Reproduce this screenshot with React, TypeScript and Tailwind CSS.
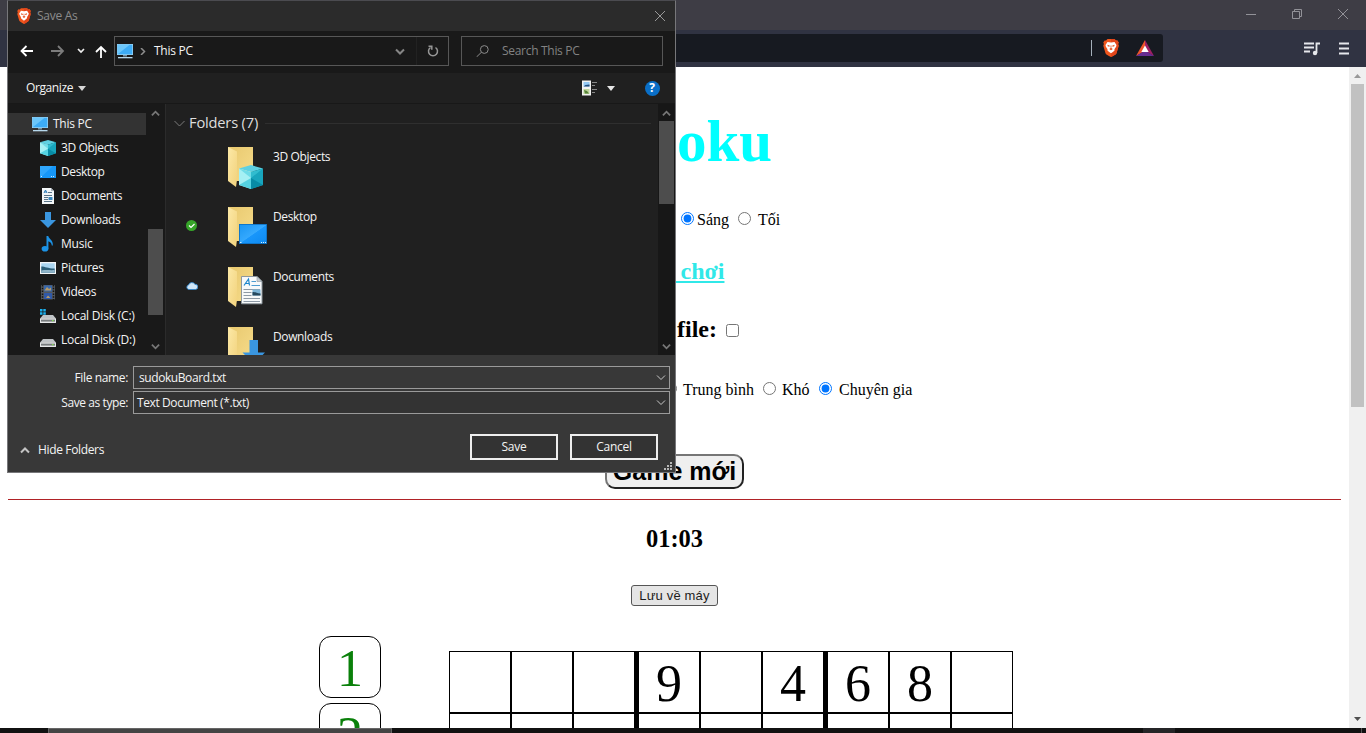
import React from "react";

const serif = "font-['Liberation_Serif',serif]";

function BraveIcon({ className }: { className: string }) {
  return (
    <svg viewBox="0 0 16 18" className={className}>
      <path d="M4.500 0h7l1.400 1.600 1.500-.2 1.300 2-.6 1.600.6 1.800-2.200 7.400c-.4 1.200-2.600 2.400-5.500 3.800-2.900-1.400-5.100-2.600-5.500-3.800L.3 6.800.9 5 .3 3.400l1.300-2 1.500.2z" fill="#f0561d" />
      <path d="M8 0h3.500l1.400 1.600 1.500-.2 1.300 2-.6 1.600.6 1.800-2.200 7.400c-.4 1.200-2.600 2.400-5.500 3.800z" fill="#e2451a" />
      <path d="M4.500 3l3.500.5L11.500 3l2 3-.4 1.700-1.700 2.600.3 1-1.500 1.400L8 14.300l-2.200-1.600-1.500-1.400.3-1-1.700-2.600L2.500 6z" fill="#fff" />
      <path d="M4.500 5.800l2.400.9-.6 1.100-1.600-.6zM11.500 5.800l-2.400.9.6 1.100 1.600-.6zM7.500 6.500h1L8.300 9l1.500.9L8 11.200 6.200 9.900 7.700 9z" fill="#e4501f" />
    </svg>
  );
}

function PcIcon({ className }: { className: string }) {
  return (
    <svg viewBox="0 0 16 16" className={className}>
      <rect x="0" y="1" width="16" height="11" fill="#9fd4f3" />
      <rect x=".7" y="1.700" width="14.600" height="9.600" fill="#3dacf6" />
      <path d="M.7 11.300V1.700h12z" fill="#6cc7fb" />
      <rect x="6" y="12" width="4" height="1.500" fill="#7795a8" />
      <rect x="1" y="14" width="14.500" height="1.300" fill="#b6d8ec" />
    </svg>
  );
}

function CubeShape() {
  return (
    <g>
      <path d="M12 0l12 3.500L12 7 0 3.500z" fill="#5ed0e2" />
      <path d="M0 3.500L12 7v17L0 20z" fill="#a5f0f4" />
      <path d="M0 3.500L12 7v6z" fill="#6fdce8" />
      <path d="M0 20l12-7v11z" fill="#55d3e2" />
      <path d="M24 3.500L12 7v17l12-4z" fill="#18a5bd" />
      <path d="M24 3.500L12 13V7z" fill="#31bccf" />
      <path d="M24 20l-12-7v11z" fill="#078ba5" />
    </g>
  );
}

const DownArrow = () => <path d="M5 0h6v8h5l-8 8-8-8h5z" fill="#3a96e0" />;

function SideIcon({ name }: { name: string }) {
  const c = "h-4 w-4 shrink-0";
  if (name === "This PC") return <PcIcon className={c} />;
  if (name === "3D Objects")
    return (
      <svg viewBox="0 0 24 24" className={c}>
        <CubeShape />
      </svg>
    );
  if (name === "Desktop")
    return (
      <svg viewBox="0 0 16 16" className={c}>
        <rect y="2" width="16" height="12" fill="#1697f8" />
        <path d="M0 14V2h13z" fill="#2fa6fc" />
        <path d="M1 12.500h1M11 12.500h1M13 12.500h1" stroke="#cbeaff" />
      </svg>
    );
  if (name === "Documents")
    return (
      <svg viewBox="0 0 16 16" className={c}>
        <path d="M2 0h9l3 3v13H2z" fill="#f3f6f8" />
        <path d="M11 0v3h3z" fill="#a9b4bc" />
        <path d="M4 5l1.500-3L7 5M4.500 4h2" stroke="#2a7ab8" fill="none" />
        <path d="M8 4.500h4M4 7.500h8M4 9.500h4M4 11.500h4M4 13.500h8" stroke="#5a7488" />
        <rect x="8.500" y="9" width="4" height="3" fill="#3a86bb" />
      </svg>
    );
  if (name === "Downloads")
    return (
      <svg viewBox="0 0 16 16" className={c}>
        <DownArrow />
      </svg>
    );
  if (name === "Music")
    return (
      <svg viewBox="0 0 16 16" className={c}>
        <ellipse cx="5" cy="12.800" rx="3.400" ry="2.800" fill="#1c93e6" />
        <path d="M6.500 0h1.800c.2 2.800 5.200 3.800 4.500 9.500h-1c-.2-2.500-1.300-3.500-3.400-4.300v7.600H6.500z" fill="#1c93e6" />
      </svg>
    );
  if (name === "Pictures")
    return (
      <svg viewBox="0 0 16 16" className={c}>
        <rect y="2" width="16" height="12" fill="#f2f5f7" />
        <rect x="1.300" y="3.300" width="13.400" height="9.400" fill="#a9d5f0" />
        <path d="M1.300 6.500c4 0 6 2 13.400 2v4.200H1.300z" fill="#2d5f78" />
        <path d="M1.300 10.500c5-1 9 0 13.400-.5v2.700H1.300z" fill="#8fb4c8" />
      </svg>
    );
  if (name === "Videos")
    return (
      <svg viewBox="0 0 16 16" className={c}>
        <rect x="1" y="1" width="14" height="14.500" fill="#55585c" />
        <path d="M2.500 1v15M13.500 1v15" stroke="#121212" strokeWidth="1.500" strokeDasharray="1.500 1.300" />
        <rect x="4" y="1.500" width="8" height="6" fill="#3767ab" />
        <rect x="4" y="9" width="8" height="6" fill="#3059a8" />
        <path d="M4.500 6.500L7 3l2 2 2-1.500v3zM6 14l2-2.500 2.500 2.500z" fill="#b59a6a" />
      </svg>
    );
  return (
    <svg viewBox="0 0 16 16" className={c}>
      <path d="M3 7h10l3 3.500H0z" fill="#bfc3c6" />
      <rect y="10.300" width="16" height="4.700" rx=".6" fill="#e6e8e9" />
      <rect x="1" y="11.600" width="14" height="2" fill="#777b7d" />
      <rect x="12" y="12" width="1.500" height="1.200" fill="#7ee04a" />
      {name.includes("C:") && (
        <path d="M0 1h2.500v2.500H0zM3.300 1h2.500v2.500H3.300zM0 4.200h2.500v2.500H0zM3.300 4.200h2.500v2.500H3.300z" fill="#1cb1ef" />
      )}
    </svg>
  );
}

function FolderIcon({ name }: { name: string }) {
  return (
    <svg viewBox="0 0 40 45" className="h-[45px] w-10 shrink-0">
      <defs>
        <linearGradient id="folderBack" x1="0" y1="0" x2="1" y2="1">
          <stop offset="0" stopColor="#e8c86e" />
          <stop offset="1" stopColor="#f6dc8b" />
        </linearGradient>
        <linearGradient id="folderFlap" x1="0" y1="0" x2="1" y2="1">
          <stop offset="0" stopColor="#fce9a7" />
          <stop offset="1" stopColor="#f2d27c" />
        </linearGradient>
        <linearGradient id="screen" x1="0" y1="0" x2="1" y2="1">
          <stop offset="0" stopColor="#1b96f2" />
          <stop offset=".5" stopColor="#35a9fe" />
          <stop offset=".52" stopColor="#1896fb" />
          <stop offset="1" stopColor="#0e8af0" />
        </linearGradient>
      </defs>
      <path d="M0 0h25v34H0z" fill="url(#folderBack)" />
      <path d="M0 0l9 4.500V33l-1 7-8-6z" fill="url(#folderFlap)" />
      {name === "3D Objects" && (
        <g transform="translate(11 18)">
          <CubeShape />
        </g>
      )}
      {name === "Desktop" && (
        <g>
          <rect x="11" y="17" width="28" height="20" fill="#0d6ebd" />
          <rect x="11.800" y="17.800" width="26.400" height="18.400" fill="url(#screen)" />
          <path d="M12 35.500h1.500M33 35.500h1M35 35.500h1M37 35.500h1" stroke="#d8efff" />
        </g>
      )}
      {name === "Documents" && (
        <g>
          <path d="M13.500 9.500H29l5 5v22.300H13.500z" fill="#f7f9fa" stroke="#8d979e" />
          <path d="M29 9.500v5h5z" fill="#c3cbd1" stroke="#8d979e" strokeWidth=".6" />
          <path d="M16 18.500l4.500-6.500 1 6.500M17.500 16.500h4" stroke="#1c86cd" strokeWidth="1.200" fill="none" />
          <path d="M23.500 14.500H28M23.500 18.500H32" stroke="#4d9bd0" />
          <path d="M15.500 22.500H32M15.500 25.500h8M15.500 28.500h8M15.500 31.500H32M15.500 34.500H32" stroke="#8d99a5" />
          <rect x="24.500" y="22.500" width="8" height="6" fill="#7db5d8" />
          <path d="M24.500 25c3-.5 4 1.500 8 1.500v2h-8z" fill="#26495f" />
        </g>
      )}
      {name === "Downloads" && <path d="M21.500 13H30v12.500h7L26 37 14.500 25.500h7z" fill="#3a96e0" />}
    </svg>
  );
}

function Chevron({ dir, className }: { dir: "up" | "down" | "right"; className: string }) {
  const d = { up: "M1 5.500L5 1.500l4 4", down: "M1 1.500l4 4 4-4", right: "M2 0l3.500 3.500L2 7" }[dir];
  return (
    <svg viewBox="0 0 10 7" className={className} fill="none" stroke="currentColor">
      <path d={d} />
    </svg>
  );
}

const sideItems = [
  ["3D Objects", "tracking-[-0.35px]"],
  ["Desktop", "tracking-[-0.4px]"],
  ["Documents", "tracking-[-0.35px]"],
  ["Downloads", "tracking-[-0.35px]"],
  ["Music", "tracking-[-0.22px]"],
  ["Pictures", "tracking-[-0.3px]"],
  ["Videos", "tracking-[-0.35px]"],
  ["Local Disk (C:)", "tracking-[-0.2px]"],
  ["Local Disk (D:)", "tracking-[-0.24px]"],
];

function SaveDialog() {
  return (
    <section className="absolute left-[7px] top-0 flex h-[473px] w-[669px] flex-col border border-[#77777a] border-t-[#4b4b50] bg-[#383838] font-['Open_Sans','Noto_Sans',sans-serif] text-[12px] leading-4 tracking-[-0.27px] text-[#f4f4f4]">
      <header className="flex h-[30px] shrink-0 items-center bg-[#2b2b2b] pl-[9px] text-[#8b8b8b]">
        <BraveIcon className="h-4 w-[14px]" />
        <span className="ml-[6px]">Save As</span>
        <svg viewBox="0 0 10 10" className="ml-auto mr-[10px] h-[10px] w-[10px]" stroke="#999" fill="none">
          <path d="M0 0l10 10M10 0L0 10" />
        </svg>
      </header>

      <div className="flex h-[42px] shrink-0 items-center bg-[#191919] pb-[2px]">
        <svg viewBox="0 0 14 12" className="ml-[12px] h-3 w-[14px]" stroke="#fff" strokeWidth="1.800" fill="none">
          <path d="M13 6H1.500M6.500 1l-5 5 5 5" />
        </svg>
        <svg viewBox="0 0 14 12" className="ml-[17px] h-3 w-[14px]" stroke="#7c7c7c" strokeWidth="1.800" fill="none">
          <path d="M0 6h12M7 1l5 5-5 5" />
        </svg>
        <svg viewBox="0 0 8 6" className="ml-[12px] h-[6px] w-2" stroke="#eee" strokeWidth="1.700" fill="none">
          <path d="M1 1l3 3 3-3" />
        </svg>
        <svg viewBox="0 0 12 14" className="ml-[10px] mt-[2px] h-[14px] w-3" stroke="#fff" strokeWidth="1.800" fill="none">
          <path d="M6 13V2M1 7l5-5 5 5" />
        </svg>
        <div className="ml-[7px] flex h-[30px] w-[335px] items-center border border-[#575757]">
          <PcIcon className="ml-[2px] h-4 w-4" />
          <Chevron dir="right" className="ml-[6px] h-[7px] w-[10px] stroke-[1.5] text-[#8d8d8d]" />
          <span className="ml-[5px]">This PC</span>
          <Chevron dir="down" className="ml-auto h-[7px] w-[10px] stroke-2 text-[#858585]" />
          <span className="ml-[11px] h-full w-px bg-[#222]" />
          <svg viewBox="0 0 12 12" className="ml-[10px] mr-[9px] h-3 w-3" fill="none" stroke="#969696" strokeWidth="1.500">
            <path d="M8.500 2.500A4.500 4.500 0 1 1 3.500 2.500M1.500 1.200h3.300v3.500" />
          </svg>
        </div>
        <div className="ml-[12px] flex h-[30px] w-[202px] items-center border border-[#575757] text-[#828282]">
          <svg viewBox="0 0 13 12" className="ml-[14px] h-3 w-[13px]" fill="none" stroke="#8c8c8c">
            <circle cx="8.300" cy="4.500" r="3.900" />
            <path d="M5.400 7.300L.5 12" />
          </svg>
          <span className="ml-[13px] tracking-[-0.3px]">Search This PC</span>
        </div>
      </div>

      <div className="flex h-[30px] shrink-0 items-center bg-[#202020]">
        <span className="ml-[18px] tracking-[-0.4px]">Organize</span>
        <svg viewBox="0 0 8 5" className="ml-[5px] h-[5px] w-2" fill="#d6d6d6">
          <path d="M0 0h8L4 5z" />
        </svg>
        <svg viewBox="0 0 16 16" className="ml-auto h-4 w-4">
          <path d="M1 .5h9v15H1z" fill="#f2f2f2" />
          <path d="M2.500 2h6v4.500h-6z" fill="#94c9f4" />
          <path d="M2.500 6.500L4.500 5l4-.5v2z" fill="#244e7d" />
          <path d="M2.500 9h6v5h-6z" fill="#bdd49b" />
          <path d="M3 10l3 1 2 2.500H4z" fill="#568339" />
          <path d="M11 2.500h5M11 5.500h3M11 9.500h5M11 12.500h3" stroke="#888" />
        </svg>
        <svg viewBox="0 0 8 5" className="ml-[10px] h-[5px] w-2" fill="#e6e6e6">
          <path d="M0 0h8L4 5z" />
        </svg>
        <span className="ml-[30px] mr-[15.500px] flex h-[15px] w-[15px] items-center justify-center rounded-full bg-[#0a6fc7] text-[12px] font-bold leading-none text-white">?</span>
      </div>

      <div className="flex h-[252px] shrink-0 overflow-hidden border-t border-[#181818]">
        <nav className="flex w-[139px] shrink-0 flex-col bg-[#191919] pt-[8px]">
          <div className="mb-[1px] mt-[1px] flex h-[22px] w-[138px] shrink-0 items-center bg-[#333] pl-[24px]">
            <SideIcon name="This PC" />
            <span className="ml-[5px]">This PC</span>
          </div>
          {sideItems.map(([name, track]) => (
            <div key={name} className="flex h-6 shrink-0 items-center pl-[32px]">
              <SideIcon name={name} />
              <span className={"ml-[5px] whitespace-nowrap " + track}>{name}</span>
            </div>
          ))}
        </nav>
        <div className="flex w-[19px] shrink-0 flex-col items-center border-r border-[#2b2b2b] bg-[#191919] pr-px">
          <Chevron dir="up" className="mt-[6px] h-[7px] w-[9px] stroke-2 text-[#777]" />
          <div className="mt-[112px] h-[86px] w-[15px] bg-[#4d4d4d]" />
          <Chevron dir="down" className="mt-[28px] h-[7px] w-[9px] stroke-2 text-[#777]" />
        </div>
        <div className="flex min-w-0 grow flex-col bg-[#202020]">
          <div className="mt-[8px] flex h-[22px] shrink-0 items-center pl-[8px]">
            <svg viewBox="0 0 11 7" className="h-[7px] w-[11px]" fill="none" stroke="#7a7a7a">
              <path d="M.5 1l5 5 5-5" />
            </svg>
            <span className="mb-[2px] ml-[4px] text-[14.7px] tracking-[-0.2px] text-[#dedede]">Folders (7)</span>
            <span className="ml-auto mr-[7px] h-px w-[386px] bg-[#2f2f2f]" />
          </div>
          {["3D Objects", "Desktop", "Documents", "Downloads"].map((name) => (
            <div key={name} className="flex h-[60px] shrink-0 pt-[13px]">
              <span className="flex w-[62px] shrink-0 pl-[20px] pt-[13px]">
                {name === "Desktop" && (
                  <svg viewBox="0 0 12 12" className="h-3 w-3">
                    <circle cx="5.500" cy="5.500" r="5.500" fill="#36a529" />
                    <path d="M3 5.500l2 2 3.500-3.500" stroke="#fff" strokeWidth="1.200" fill="none" />
                  </svg>
                )}
                {name === "Documents" && (
                  <svg viewBox="0 0 12 12" className="h-3 w-3">
                    <path d="M2.800 9.500a2.300 2.300 0 0 1-.3-4.500A3.600 3.600 0 0 1 9 4.300 2.600 2.600 0 0 1 9.500 9.500z" fill="#cfe6f7" stroke="#2f83c9" strokeWidth=".9" />
                  </svg>
                )}
              </span>
              <FolderIcon name={name} />
              <span className="ml-[5px] mt-[2px] tracking-[-0.37px]">{name}</span>
            </div>
          ))}
        </div>
        <div className="flex w-[17px] shrink-0 flex-col items-center bg-[#171717]">
          <Chevron dir="up" className="mt-[6px] h-[7px] w-[9px] stroke-2 text-[#777]" />
          <div className="mt-[4px] h-[83px] w-[15px] bg-[#4d4d4d]" />
          <Chevron dir="down" className="mt-[139px] h-[7px] w-[9px] stroke-2 text-[#777]" />
        </div>
      </div>

      <div className="mt-[11px] flex shrink-0 items-center">
        <span className="w-[120px] text-right tracking-[-0.36px]">File name:</span>
        <div className="ml-[5px] flex h-[23px] w-[537px] items-center border border-[#9a9a9a] bg-[#383838] pl-[5px] tracking-[-0.42px]">
          sudokuBoard.txt
          <Chevron dir="down" className="ml-auto mr-[3px] h-[7px] w-[10px] text-[#c8c8c8]" />
        </div>
      </div>
      <div className="mt-[2px] flex shrink-0 items-center">
        <span className="w-[120px] text-right tracking-[-0.42px]">Save as type:</span>
        <div className="ml-[5px] flex h-[23px] w-[537px] items-center border border-[#9a9a9a] bg-[#333] pl-[3px] tracking-[-0.4px]">
          Text Document (*.txt)
          <Chevron dir="down" className="ml-auto mr-[3px] h-[7px] w-[10px] text-[#c8c8c8]" />
        </div>
      </div>
      <div className="mt-[20px] flex shrink-0 items-center">
        <Chevron dir="up" className="ml-[12px] mt-[6px] h-[7px] w-[10px] stroke-2 text-[#c4c4c4]" />
        <span className="ml-[8px] mt-[6px] tracking-[-0.35px]">Hide Folders</span>
        <button className="ml-auto h-[26px] w-[88px] border-2 border-[#eee] bg-[#333]">Save</button>
        <button className="ml-[12px] mr-[17px] h-[26px] w-[88px] border-2 border-[#eee] bg-[#333]">Cancel</button>
      </div>
      <svg viewBox="0 0 8 8" className="ml-auto mr-[3px] mt-[2px] h-2 w-2 shrink-0" fill="#b8b8b8">
        <path d="M6 0h2v2H6zM3 3h2v2H3zM6 3h2v2H6zM0 6h2v2H0zM3 6h2v2H3zM6 6h2v2H6z" />
      </svg>
    </section>
  );
}

const rows = [
  ["", "", "", "9", "", "4", "6", "8", ""],
  ["", "", "", "", "", "", "", "", ""],
];

function Board() {
  return (
    <div className="mt-[15px] flex flex-col">
      {rows.map((row, r) => (
        <div key={r} className="flex">
          {row.map((v, i) => (
            <div
              key={i}
              className={
                "flex h-[62px] items-center justify-center border border-black text-[52px] leading-none text-black " +
                (i === 2 || i === 5 ? "w-[65px] border-r-4" : "w-[62px]")
              }
            >
              <span className="mt-[3px]">{v}</span>
            </div>
          ))}
        </div>
      ))}
    </div>
  );
}

export default function App() {
  return (
    <div className={"relative flex h-[733px] w-[1366px] flex-col overflow-hidden bg-white text-black " + serif}>
      <div className="flex h-[30px] shrink-0 items-center justify-end bg-[#3e3d45]">
        <svg viewBox="0 0 104 12" className="mb-[2px] mr-[17px] h-3 w-[104px]" stroke="#929298" fill="none">
          <path d="M1 6.500h10M47.500 3.500h7v7h-7zM49.500 3.500v-2h7v7h-2M93 1l10 10M103 1l-10 10" />
        </svg>
      </div>
      <div className="flex h-[37px] shrink-0 items-center bg-[#303342]">
        <div className="mb-px ml-[163px] flex h-7 w-[1000px] items-center justify-end rounded-[3px] bg-[#171a21]">
          <span className="h-4 w-px bg-[#a5b0bb]" />
          <BraveIcon className="ml-[11px] h-[18px] w-4" />
          <svg viewBox="0 0 18 16" className="ml-[17px] mr-[9px] h-4 w-[18px]">
            <path d="M9 0L0 16l9-5z" fill="#f0542c" />
            <path d="M9 0l9 16-9-5z" fill="#9e1f63" />
            <path d="M0 16h18l-9-5.500z" fill="#662d91" />
            <path d="M9 5.500l3.700 6.500H5.300z" fill="#fff" />
          </svg>
        </div>
        <svg viewBox="0 0 16 14" className="ml-[141px] h-[14px] w-4" fill="none" stroke="#e6e8ec" strokeWidth="1.800">
          <path d="M0 1.500h10M0 5.500h10M0 9.500h6M12.500 11V1.500H16" />
          <circle cx="11" cy="11" r="2.200" fill="#e6e8ec" stroke="none" />
        </svg>
        <svg viewBox="0 0 10 13" className="ml-[19px] h-[13px] w-[10px]" stroke="#e6e8ec" strokeWidth="2">
          <path d="M0 1.500h10M0 6.500h10M0 11.500h10" />
        </svg>
      </div>

      <div className="flex h-[661px] shrink-0 overflow-hidden">
        <main className="flex w-[1349px] flex-col">
          <h1 className="mt-[44px] h-[60px] shrink-0 pl-[677px] text-[59px] font-bold leading-[60px] text-[#00ffff]">oku</h1>
          <div className="mt-[39px] flex h-5 shrink-0 items-start pl-[681px] text-[16px] leading-5">
            <input type="radio" name="theme" defaultChecked className="mt-[2px] h-[13px] w-[13px]" />
            <span className="ml-[3px] w-[41px]">Sáng</span>
            <input type="radio" name="theme" className="mt-[2px] h-[13px] w-[13px]" />
            <span className="ml-[7px]">Tối</span>
          </div>
          <div className="mt-[27px] h-7 shrink-0 whitespace-pre pl-[674.5px] text-[24px] font-bold leading-7 text-[#30e8e8] underline"> chơi</div>
          <div className="mt-[30px] flex h-7 shrink-0 items-start pl-[677px] text-[24px] font-bold leading-7">
            <span className="w-[49px]">file:</span>
            <input type="checkbox" className="mt-[9px] h-[13px] w-[13px]" />
          </div>
          <div className="mt-[37px] flex h-5 shrink-0 items-start pl-[663.5px] text-[16px] leading-5">
            <input type="radio" name="level" className="mt-[2px] h-[13px] w-[13px]" />
            <span className="ml-[6.5px] w-[80px]">Trung bình</span>
            <input type="radio" name="level" className="mt-[2px] h-[13px] w-[13px]" />
            <span className="ml-[6px] w-[37px]">Khó</span>
            <input type="radio" name="level" defaultChecked className="mt-[2px] h-[13px] w-[13px]" />
            <span className="ml-[7px]">Chuyên gia</span>
          </div>
          <button className="ml-[605px] mt-[54px] flex h-[35px] w-[139px] shrink-0 items-center justify-center rounded-[10px] border-2 border-b-[#222] border-l-[#767676] border-r-[#222] border-t-[#767676] bg-[#efefef] font-['Liberation_Sans',sans-serif] text-[25px] font-bold leading-none">
            Game mới
          </button>
          <div className="ml-[8px] mt-[10px] h-px w-[1333px] shrink-0 bg-[#b02227]" />
          <div className="mt-[25px] h-7 shrink-0 text-center text-[24.5px] font-bold leading-7">01:03</div>
          <button className="ml-[631px] mt-[32px] h-[21px] w-[87px] shrink-0 rounded-[3px] border border-[#555] bg-[#e5e5e5] font-['Liberation_Sans',sans-serif] text-[13px] leading-none tracking-[0.17px] text-[#1c1c1c]">
            Lưu về máy
          </button>
          <div className="mt-[30px] flex pl-[319px]">
            <div className="mr-[68px] flex flex-col gap-[5px]">
              {["1", "2"].map((n) => (
                <div key={n} className="flex h-[62px] w-[62px] items-center justify-center rounded-[12px] border border-black text-[52px] leading-none text-[#0a800a]">
                  <span className="mt-[4px]">{n}</span>
                </div>
              ))}
            </div>
            <Board />
          </div>
        </main>
        <div className="flex w-[17px] shrink-0 flex-col items-center bg-[#f0f0f0]">
          <svg viewBox="0 0 7 4" className="mt-[7px] h-1 w-[7px]" fill="#999">
            <path d="M3.500 0L7 4H0z" />
          </svg>
          <div className="mt-[6px] h-[323px] w-[13px] bg-[#c1c1c1]" />
          <svg viewBox="0 0 7 4" className="mb-[7px] mt-auto h-1 w-[7px]" fill="#505050">
            <path d="M0 0h7L3.500 4z" />
          </svg>
        </div>
      </div>

      <div className="flex h-[5px] shrink-0 bg-[#111]">
        <div className="ml-[48px] w-[344px] border-x border-t border-[#666] bg-[#444]" />
        <div className="ml-[751px] w-[32px] bg-[#252527]" />
        <div className="ml-auto mr-[4px] w-px bg-[#555]" />
      </div>

      <SaveDialog />
    </div>
  );
}
